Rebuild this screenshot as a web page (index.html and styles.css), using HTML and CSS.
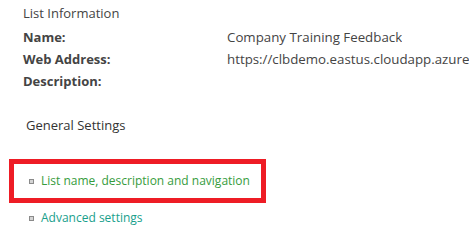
FILE: index.html
```html
<!DOCTYPE html>
<html lang="en">
<head>
    <meta charset="UTF-8">
    <title>List Settings</title>
    <link rel="stylesheet" href="styles.css">
</head>
<body>
    <div class="list-info">
        <h3 class="section-title">List Information</h3>
        <div class="info-row">
            <span class="info-label">Name:</span>
            <span class="info-value">Company Training Feedback</span>
        </div>
        <div class="info-row">
            <span class="info-label">Web Address:</span>
            <span class="info-value">https://clbdemo.eastus.cloudapp.azure</span>
        </div>
        <div class="info-row">
            <span class="info-label">Description:</span>
            <span class="info-value"></span>
        </div>
    </div>

    <div class="settings">
        <h3 class="settings-title">General Settings</h3>
        <ul class="settings-links">
            <li class="highlight"><span class="bullet"></span><a href="#" class="link-green">List name, description and navigation</a></li>
            <li><span class="bullet"></span><a href="#" class="link-teal">Advanced settings</a></li>
        </ul>
    </div>
</body>
</html>
```

FILE: styles.css
```css
/* General */
body {
    margin: 0;
    padding: 0;
    font-family: 'Open Sans', 'Noto Sans', sans-serif;
    font-size: 13px;
    color: #444;
    background: white;
    overflow: hidden;
    width: 472px;
    height: 244px;
}

/* List Information */
.list-info {
    padding: 4px 0 0 23px;
}

.section-title {
    margin: 0 0 4px 0;
    font-size: 13px;
    font-weight: normal;
    line-height: 18px;
    color: #444;
}

.info-row {
    display: flex;
    line-height: 22px;
    white-space: nowrap;
}

.info-label {
    width: 204px;
    flex-shrink: 0;
    font-weight: bold;
    color: #444;
}

.info-value {
    font-size: 13.3px;
    color: #444;
    overflow: hidden;
}

/* General Settings */
.settings {
    padding: 24px 0 0 26px;
}

.settings-title {
    margin: 0;
    font-size: 13px;
    font-weight: normal;
    line-height: 18px;
    color: #333;
}

.settings-links {
    list-style: none;
    margin: 0;
    padding: 0;
    font-size: 12px;
}

.settings-links li {
    display: flex;
    align-items: center;
    line-height: 18px;
    margin-left: 3px;
}

.settings-links li.highlight {
    margin: 25px 0 0 -17px;
    padding: 8px 0 8px 15px;
    width: 232px;
    border: 5px solid #ee1c25;
}

.settings-links li + li {
    margin-top: 6px;
}

.bullet {
    width: 3px;
    height: 3px;
    border: 1px solid #8a8a8a;
    background: #d4d4d4;
    margin-right: 7px;
}

.link-green {
    color: #369c3d;
    text-decoration: none;
}

.link-teal {
    color: #18a08c;
    text-decoration: none;
}
```
